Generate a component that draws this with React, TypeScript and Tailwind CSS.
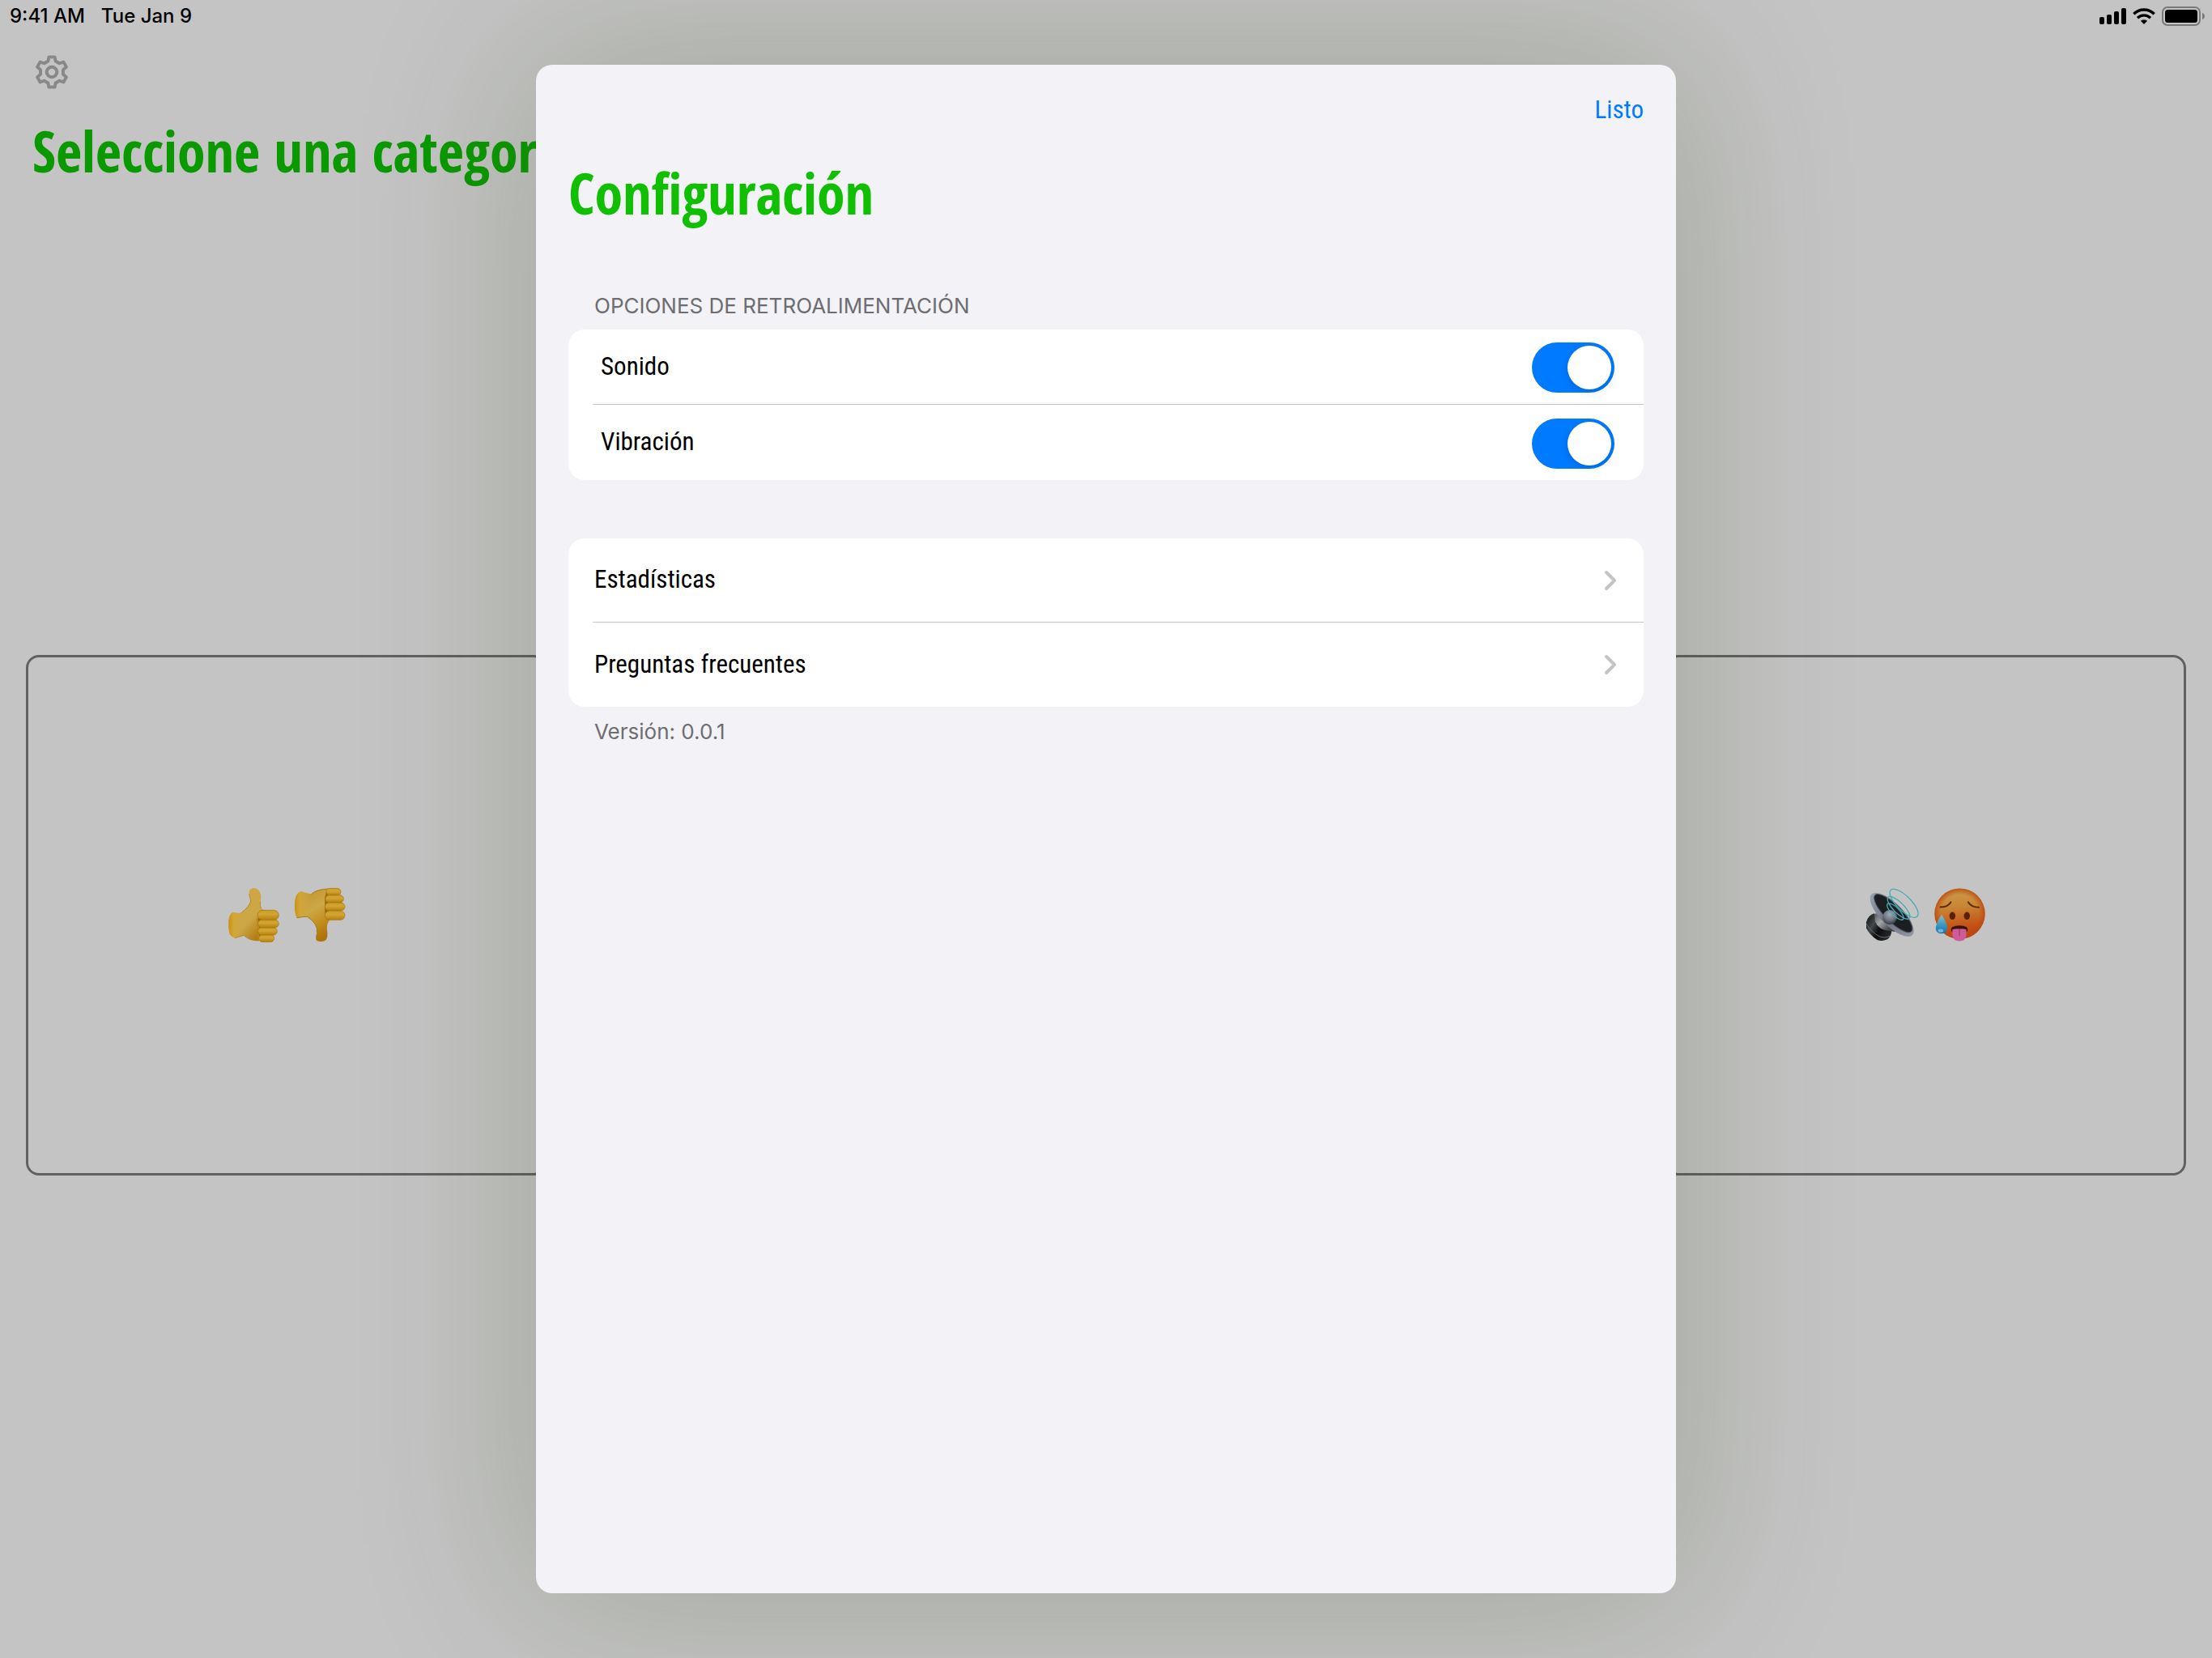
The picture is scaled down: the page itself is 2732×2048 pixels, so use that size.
import React from "react";

const DISPLAY = "font-['Open_Sans_Condensed','Roboto_Condensed','Open_Sans',sans-serif]";
const CONDENSED = "font-['Roboto_Condensed','Roboto',sans-serif]";

const polar = (r: number, deg: number) => {
  const a = (deg * Math.PI) / 180;
  return `${(r * Math.sin(a)).toFixed(1)} ${(-r * Math.cos(a)).toFixed(1)}`;
};

const gearPath =
  "M" +
  [0, 60, 120, 180, 240, 300]
    .flatMap((t) => [polar(42, t - 19), polar(56, t - 11), polar(56, t + 11), polar(42, t + 19)])
    .join("L") +
  "Z";

function GearIcon() {
  return (
    <svg viewBox="-62 -62 124 124" className="size-[42px]" aria-hidden="true">
      <g fill="none" stroke="#888888" strokeWidth="11.5" strokeLinejoin="round">
        <path d={gearPath} />
        <circle r="18.5" strokeWidth="12" />
      </g>
    </svg>
  );
}

function SignalIcon() {
  return (
    <svg viewBox="0 0 33 20" className="h-5 w-[33px]" aria-hidden="true">
      <rect x="0" y="11" width="6" height="9" rx="2" />
      <rect x="9" y="8" width="6" height="12" rx="2" />
      <rect x="18" y="4" width="6" height="16" rx="2" />
      <rect x="27" y="0" width="6" height="20" rx="2" />
    </svg>
  );
}

function WifiIcon() {
  return (
    <svg viewBox="0 0 28 20" className="h-5 w-7" aria-hidden="true">
      <path d="M14 20l-4.1-4.2a6 6 0 0 1 8.200 0z" />
      <g fill="none" stroke="#000" strokeWidth="3.400">
        <path d="M1.300 7.300a18 18 0 0 1 25.400 0" />
        <path d="M6 12.200a11.300 11.300 0 0 1 16 0" />
      </g>
    </svg>
  );
}

function BatteryIcon() {
  return (
    <svg viewBox="0 0 54 24" className="h-6 w-[54px]" aria-hidden="true">
      <rect x="1" y="1" width="46" height="22" rx="6" fill="none" stroke="#7a7a7a" strokeWidth="2" />
      <rect x="4" y="4" width="40" height="16" rx="3.500" />
      <path d="M50 8a4.200 4.200 0 0 1 0 8z" fill="#7a7a7a" />
    </svg>
  );
}

function Chevron() {
  return (
    <svg viewBox="0 0 16 26" className="h-[26px] w-4" aria-hidden="true">
      <path d="M3 3l10 10-10 10" fill="none" stroke="#c4c4c6" strokeWidth="4" strokeLinecap="round" strokeLinejoin="round" />
    </svg>
  );
}

function Fingers({ rects }: { rects: number[][] }) {
  return (
    <>
      {rects.map(([x, y, w, h]) => (
        <rect key={y} x={x} y={y} width={w} height={h} rx={h / 2} fill="url(#finger)" stroke="#a8740f" strokeWidth="2" />
      ))}
    </>
  );
}

function ThumbUp() {
  return (
    <svg viewBox="38 42 192 204" className="h-[68px] w-16" role="img" aria-label="Pulgar arriba">
      <defs>
        <linearGradient id="finger" x1="0" y1="0" x2="0" y2="1">
          <stop offset="0" stopColor="#c99a25" />
          <stop offset="0.400" stopColor="#d3a633" />
          <stop offset="1" stopColor="#b57f10" />
        </linearGradient>
        <linearGradient id="handUp" x1="0.100" y1="0.200" x2="0.700" y2="1">
          <stop offset="0" stopColor="#cfa540" />
          <stop offset="0.600" stopColor="#cca747" />
          <stop offset="1" stopColor="#b37a10" />
        </linearGradient>
        <linearGradient id="cuff" x1="0" y1="0" x2="1" y2="0">
          <stop offset="0" stopColor="#c8921a" />
          <stop offset="0.300" stopColor="#d2a535" />
          <stop offset="1" stopColor="#cca747" stopOpacity="0" />
        </linearGradient>
      </defs>
      <path d="M150 140L178 128 205 140V236L170 240 148 232Z" fill="#996508" />
      <path
        d="M58 135Q76 139 90 136Q117 115 124 94Q122 82 118 67Q117 47 132 45Q149 44 158 60Q165 76 160 95Q157 112 163 120Q171 126 182 128L165 134Q149 140 150 160L154 240Q130 239 118 233Q105 227 99 220Q84 224 66 230Q54 227 46 215Q40 194 42 168Q45 140 58 135Z"
        fill="url(#handUp)"
      />
      <path d="M58 135Q76 139 90 136Q98 130 102 127Q92 175 104 223L99 220Q84 224 66 230Q54 227 46 215Q40 194 42 168Q45 140 58 135Z" fill="url(#cuff)" />
      <path d="M90 136Q117 115 124 94Q122 82 118 67M99 220Q84 224 66 230M99 220Q116 240 154 240M160 95Q157 112 163 120" fill="none" stroke="#a8740f" strokeWidth="2" />
      <path d="M148 158Q156 195 152 238" fill="none" stroke="#b88718" strokeWidth="6" />
      <Fingers rects={[[154, 217, 57, 28], [151, 191, 71, 28], [151, 162, 77, 30], [149, 127, 79, 36]]} />
    </svg>
  );
}

function ThumbDown() {
  return (
    <svg viewBox="283 44 190 204" className="h-[68px] w-16" role="img" aria-label="Pulgar abajo">
      <defs>
        <linearGradient id="handDown" x1="0.200" y1="0" x2="0.600" y2="1">
          <stop offset="0" stopColor="#c4942a" />
          <stop offset="0.450" stopColor="#cca747" />
          <stop offset="0.700" stopColor="#c39222" />
          <stop offset="1" stopColor="#ad720c" />
        </linearGradient>
      </defs>
      <path d="M395 52L440 55 445 155 400 165Z" fill="#996508" />
      <path
        d="M308 59Q330 67 347 69Q368 50 412 50Q398 58 400 75L398 140Q398 160 414 166Q402 180 405 203Q410 232 397 242Q380 249 366 241Q360 232 367 212Q370 193 360 180Q350 165 332 153Q315 153 293 157Q284 140 285 105Q287 65 308 59Z"
        fill="url(#handDown)"
      />
      <path d="M308 59Q330 67 347 69Q338 110 332 153Q315 153 293 157Q284 140 285 105Q287 65 308 59Z" fill="url(#cuff)" />
      <path d="M347 69Q368 50 412 50M293 157Q315 153 332 153Q350 165 360 180Q370 193 367 212M398 75L397 140Q398 160 410 166" fill="none" stroke="#a06c0c" strokeWidth="2.500" />
      <Fingers rects={[[402, 48, 54, 26], [399, 73, 67, 28], [397, 101, 74, 30], [397, 131, 74, 34]]} />
    </svg>
  );
}

function Speaker() {
  return (
    <svg viewBox="46 48 200 204" className="h-[68px] w-[66px]" role="img" aria-label="Altavoz">
      <defs>
        <linearGradient id="magnet" x1="0" y1="0.300" x2="1" y2="0.900">
          <stop offset="0" stopColor="#202224" />
          <stop offset="0.250" stopColor="#44474a" />
          <stop offset="0.500" stopColor="#0c0d0e" />
          <stop offset="1" stopColor="#2c2e30" />
        </linearGradient>
        <linearGradient id="neck" x1="0" y1="0" x2="1" y2="1">
          <stop offset="0" stopColor="#4b4e52" />
          <stop offset="0.400" stopColor="#a4a6aa" />
          <stop offset="0.700" stopColor="#55585c" />
          <stop offset="1" stopColor="#2a2c2e" />
        </linearGradient>
        <linearGradient id="rim" x1="0" y1="0" x2="1" y2="0">
          <stop offset="0" stopColor="#9aa2b0" />
          <stop offset="0.500" stopColor="#6d7480" />
          <stop offset="1" stopColor="#8f96a2" />
        </linearGradient>
        <radialGradient id="dome" cx="0.500" cy="0.300" r="0.700">
          <stop offset="0" stopColor="#a4abb6" />
          <stop offset="0.600" stopColor="#6d7480" />
          <stop offset="1" stopColor="#343940" />
        </radialGradient>
      </defs>
      <path d="M49 178Q54 154 78 145L144 212Q141 232 128 242Q108 251 90 244Q62 226 49 200Z" fill="url(#magnet)" />
      <path d="M50 184Q66 214 100 232Q118 239 138 230" fill="none" stroke="#686b70" strokeWidth="3" />
      <path d="M80 146L82 175Q96 208 136 210L158 214 110 140Z" fill="url(#neck)" />
      <g transform="rotate(45)">
        <ellipse cx="208" cy="3" rx="108" ry="42" fill="url(#rim)" />
        <ellipse cx="208" cy="-4" rx="96" ry="31" fill="#1c1f22" />
        <ellipse cx="208" cy="-4" rx="96" ry="31" fill="none" stroke="#4a505a" strokeWidth="3" />
      </g>
      <circle cx="137" cy="159" r="27" fill="url(#dome)" />
      <g transform="rotate(45)" fill="none" stroke="#4aa9b6" strokeWidth="4">
        <ellipse cx="210" cy="-59" rx="70" ry="27" />
        <ellipse cx="208" cy="-33" rx="56" ry="20" />
        <ellipse cx="209" cy="-14" rx="41" ry="15" />
      </g>
    </svg>
  );
}

function HotFace() {
  return (
    <svg viewBox="298 50 192 200" className="h-[68px] w-[65px]" role="img" aria-label="Cara con calor">
      <defs>
        <linearGradient id="skin" x1="0.500" y1="0" x2="0.600" y2="1">
          <stop offset="0" stopColor="#cb9a4c" />
          <stop offset="0.350" stopColor="#c98634" />
          <stop offset="0.700" stopColor="#c4581a" />
          <stop offset="1" stopColor="#bd3a10" />
        </linearGradient>
        <radialGradient id="glow" cx="0.500" cy="0.500" r="0.500">
          <stop offset="0.750" stopColor="#c04a10" stopOpacity="0" />
          <stop offset="1" stopColor="#b84a12" stopOpacity="0.850" />
        </radialGradient>
        <linearGradient id="sweat" x1="0" y1="0" x2="0" y2="1">
          <stop offset="0" stopColor="#8fc0cc" />
          <stop offset="0.500" stopColor="#3d9cc4" />
          <stop offset="1" stopColor="#1272b0" />
        </linearGradient>
      </defs>
      <circle cx="394" cy="146" r="92" fill="url(#skin)" />
      <circle cx="394" cy="146" r="92" fill="url(#glow)" />
      <g fill="none" stroke="#5e2a08" strokeWidth="6" strokeLinecap="round">
        <path d="M323 122Q350 122 361 104" />
        <path d="M425 104Q436 122 463 123" />
      </g>
      <ellipse cx="367" cy="154" rx="11" ry="14" fill="#5a2108" />
      <ellipse cx="420" cy="154" rx="11" ry="14" fill="#5a2108" />
      <path d="M362 206Q360 190 393 189Q425 190 423 206L418 214H367Z" fill="#3b1206" />
      <path d="M367 204Q380 199 393 202Q406 199 418 204V222Q416 246 393 246Q369 246 367 222Z" fill="#cf5c98" />
      <path d="M393 203V226" stroke="#a83c74" strokeWidth="4" strokeLinecap="round" />
      <path d="M328 149Q348 180 348 199Q347 219 327 219Q306 218 306 199Q307 180 328 149Z" fill="url(#sweat)" />
      <ellipse cx="324" cy="208" rx="10" ry="6" fill="#6fb8da" />
    </svg>
  );
}

function SwitchRow({ id, label, last }: { id: string; label: string; last?: boolean }) {
  return (
    <div
      className={`ml-[30px] flex h-[93px] items-center justify-between pr-9 pl-2.5 ${last ? "" : "border-b border-[#c4c4c6]"}`}
    >
      <label htmlFor={id}>{label}</label>
      <input
        id={id}
        type="checkbox"
        role="switch"
        defaultChecked
        className="mt-0.5 h-[62px] w-[102px] cursor-pointer appearance-none rounded-full bg-[#e9e9eb] p-1 before:block before:size-[54px] before:rounded-full before:bg-white before:shadow-[0_3px_8px_rgba(0,0,0,0.15)] checked:bg-[#007aff] checked:before:ml-10"
      />
    </div>
  );
}

function LinkRow({ label, last }: { label: string; last?: boolean }) {
  return (
    <li className={`ml-[30px] h-[104px] ${last ? "" : "border-b border-[#c4c4c6]"}`}>
      <a href="#" className="flex h-full items-center justify-between pr-[33px] pl-0.5">
        {label}
        <Chevron />
      </a>
    </li>
  );
}

export default function App() {
  const card = "flex aspect-square items-center justify-center gap-[18px] rounded-2xl border-[3px] border-[#616161]";
  return (
    <div className="relative flex min-h-screen flex-col overflow-hidden bg-[#c4c4c4] font-['Inter',sans-serif] text-black">
      <div className="flex h-10 items-center justify-between pr-2 pl-3 text-[24px] font-medium">
        <div className="flex gap-5">
          <span>9:41 AM</span>
          <span>Tue Jan 9</span>
        </div>
        <div className="flex items-center gap-2">
          <SignalIcon />
          <WifiIcon />
          <BatteryIcon />
        </div>
      </div>
      <header className="px-10 pt-7">
        <button type="button" aria-label="Ajustes" className="ml-[3px] block">
          <GearIcon />
        </button>
        <h1 className={`${DISPLAY} mt-7 text-[70px] leading-[96px] font-bold whitespace-nowrap text-[#0a9a00]`}>
          Seleccione una categoría
        </h1>
      </header>
      <main className="flex flex-1 flex-col justify-center px-8 pb-[22px]">
        <div className="grid grid-cols-4 gap-8">
          <button type="button" className={card}>
            <ThumbUp />
            <ThumbDown />
          </button>
          <div className={card} />
          <div className={card} />
          <button type="button" className={card}>
            <Speaker />
            <HotFace />
          </button>
        </div>
      </main>

      <div className="absolute inset-0 flex justify-center py-20">
        <section
          role="dialog"
          aria-labelledby="settings-title"
          className="flex w-full max-w-[1408px] flex-col rounded-[20px] bg-[#f2f2f7] px-10 shadow-[0_0_220px_rgba(37,62,12,0.24)]"
        >
          <div className="flex justify-end pt-8">
            <button type="button" className={`${CONDENSED} text-[31px] leading-[48px] text-[#007aff]`}>
              Listo
            </button>
          </div>
          <h2 id="settings-title" className={`${DISPLAY} mt-[30px] text-[70px] leading-[96px] font-bold text-[#10c000]`}>
            Configuración
          </h2>

          <h3 className="mt-[74px] pl-8 text-[26px] leading-9 text-[#6d6d72]">OPCIONES DE RETROALIMENTACIÓN</h3>
          <div className={`${CONDENSED} mt-[11px] rounded-[20px] bg-white text-[31px]`}>
            <SwitchRow id="sound" label="Sonido" />
            <SwitchRow id="vibration" label="Vibración" last />
          </div>

          <ul className={`${CONDENSED} mt-[72px] rounded-[20px] bg-white text-[31px]`}>
            <LinkRow label="Estadísticas" />
            <LinkRow label="Preguntas frecuentes" last />
          </ul>
          <p className="mt-[13px] pl-8 text-[26px] leading-9 text-[#6d6d72]">Versión: 0.0.1</p>
        </section>
      </div>
    </div>
  );
}
